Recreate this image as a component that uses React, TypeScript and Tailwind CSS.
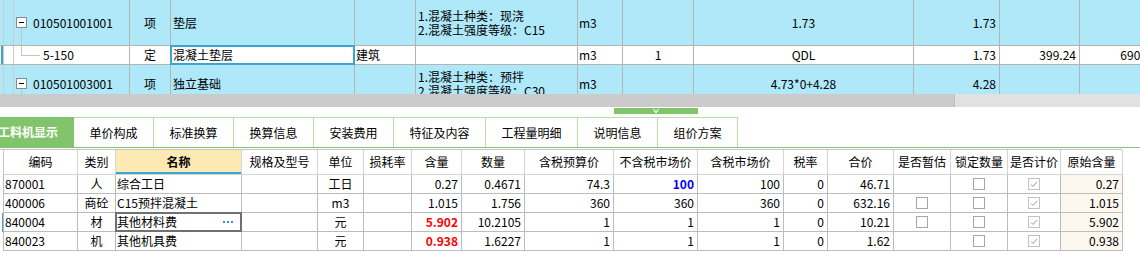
import React from 'react';

const TW = ['w-[4px]', 'w-[10px]', 'w-[116px]', 'w-[41px]', 'w-[184px]', 'w-[61px]', 'w-[162px]', 'w-[45px]', 'w-[71px]', 'w-[220px]', 'w-[86px]', 'w-[80px]', 'w-[81px]'];

function MinusBox() {
  return (
    <div className="w-[11px] h-[11px] shrink-0 border border-[#8a8a8a] bg-white flex items-center justify-center">
      <div className="w-[5px] h-px bg-black" />
    </div>
  );
}

type TC = { content?: React.ReactNode; align?: 'l' | 'c' | 'r'; extra?: string };

function TopRow({ h, cells, white }: { h: string; cells: TC[]; white?: boolean }) {
  return (
    <div className={`flex ${h} ${white ? 'bg-white' : 'bg-[#afe8f9]'} border-b border-[#b4b4b4]`}>
      {cells.map((c, i) => (
        <div
          key={i}
          className={`${TW[i]} shrink-0 h-full border-r ${i < 2 ? 'border-[#cdcdcd]' : 'border-[#b4b4b4]'} flex items-center overflow-hidden whitespace-nowrap ${
            c.align === 'c' ? 'justify-center' : c.align === 'r' ? 'justify-end pr-[3px]' : ''
          } ${c.extra ?? ''}`}
        >
          {c.content}
        </div>
      ))}
    </div>
  );
}

function TopGrid() {
  const feat = (a: string, b: string) => (
    <div className="leading-[14px]">
      <div>{a}</div>
      <div>{b}</div>
    </div>
  );
  return (
    <div className="h-[94px] overflow-hidden bg-[#afe8f9]">
      <div className="w-[1160px]">
        <TopRow
          h="h-[46px]"
          cells={[
            {},
            {},
            {
              extra: 'relative pl-[2px]',
              content: (
                <>
                  <MinusBox />
                  <span className="ml-[6px]">010501001001</span>
                  <div className="absolute left-[7px] top-[28px] bottom-0 w-px bg-[#c4c4c4]" />
                </>
              ),
            },
            { content: '项', align: 'c' },
            { content: '垫层', extra: 'pl-[2px]' },
            {},
            { content: feat('1.混凝土种类：现浇', '2.混凝土强度等级：C15'), extra: 'pl-[2px]' },
            { content: 'm3', extra: 'pl-[1px]' },
            {},
            { content: '1.73', align: 'c' },
            { content: '1.73', align: 'r' },
            {},
            {},
          ]}
        />
        <TopRow
          h="h-[19px]"
          white
          cells={[
            { content: <div className="ml-[1px] w-[2px] h-full bg-[#3ba5d2]" /> },
            {},
            {
              extra: 'relative pl-[29px]',
              content: (
                <>
                  <div className="absolute left-[7px] top-0 h-[9px] w-px bg-[#c4c4c4]" />
                  <div className="absolute left-[7px] top-[9px] w-[19px] h-px bg-[#c4c4c4]" />
                  <span>5-150</span>
                </>
              ),
            },
            { content: '定', align: 'c' },
            {
              extra: 'relative pl-[2px] overflow-visible',
              content: (
                <>
                  <span>混凝土垫层</span>
                  <div className="absolute -left-[1px] -top-[1px] -right-[1px] -bottom-[1px] border-2 border-[#3ba5d2]" />
                </>
              ),
            },
            { content: '建筑', extra: 'pl-[1px]' },
            {},
            { content: 'm3', extra: 'pl-[1px]' },
            { content: '1', align: 'c' },
            { content: 'QDL', align: 'c' },
            { content: '1.73', align: 'r' },
            { content: '399.24', align: 'r' },
            { content: '690.69', align: 'r' },
          ]}
        />
        <TopRow
          h="h-[38px]"
          cells={[
            {},
            {},
            {
              extra: 'relative pl-[2px]',
              content: (
                <>
                  <MinusBox />
                  <span className="ml-[6px]">010501003001</span>
                  <div className="absolute left-[7px] top-[24px] bottom-0 w-px bg-[#c4c4c4]" />
                </>
              ),
            },
            { content: '项', align: 'c' },
            { content: '独立基础', extra: 'pl-[2px]' },
            {},
            { content: feat('1.混凝土种类：预拌', '2.混凝土强度等级：C30'), extra: 'pl-[2px]' },
            { content: 'm3', extra: 'pl-[1px]' },
            {},
            { content: '4.73*0+4.28', align: 'c' },
            { content: '4.28', align: 'r' },
            {},
            {},
          ]}
        />
      </div>
    </div>
  );
}

function Tabs() {
  const tabs: [string, string][] = [
    ['单价构成', 'w-[80px]'],
    ['标准换算', 'w-[80px]'],
    ['换算信息', 'w-[80px]'],
    ['安装费用', 'w-[80px]'],
    ['特征及内容', 'w-[92px]'],
    ['工程量明细', 'w-[92px]'],
    ['说明信息', 'w-[80px]'],
    ['组价方案', 'w-[80px]'],
  ];
  return (
    <div className="h-[31px] flex border-b border-[#82c46c]">
      <div className="w-[74px] h-full bg-[#82c46c] text-white font-bold flex items-center overflow-hidden whitespace-nowrap">
        <span className="-ml-[2px]">工料机显示</span>
      </div>
      {tabs.map(([t, w]) => (
        <div key={t} className={`${w} h-full border-t border-r border-[#b9dfa7] bg-white flex items-center justify-center`}>
          {t}
        </div>
      ))}
    </div>
  );
}

const BW = ['w-[4px]', 'w-[74px]', 'w-[38px]', 'w-[126px]', 'w-[76px]', 'w-[46px]', 'w-[48px]', 'w-[50px]', 'w-[63px]', 'w-[89px]', 'w-[84px]', 'w-[86px]', 'w-[44px]', 'w-[66px]', 'w-[57px]', 'w-[57px]', 'w-[53px]', 'w-[62px]'];
const BA: ('l' | 'c' | 'r')[] = ['l', 'l', 'c', 'l', 'l', 'c', 'r', 'r', 'r', 'r', 'r', 'r', 'r', 'r', 'c', 'c', 'c', 'r'];
const HEAD = ['', '编码', '类别', '名称', '规格及型号', '单位', '损耗率', '含量', '数量', '含税预算价', '不含税市场价', '含税市场价', '税率', '合价', '是否暂估', '锁定数量', '是否计价', '原始含量'];

function Check({ checked }: { checked?: boolean }) {
  return checked ? (
    <div className="w-[12px] h-[12px] border border-[#c2c2c2] bg-white flex items-center justify-center">
      <svg width="8" height="7" viewBox="0 0 8 7">
        <polyline points="1,3.5 3,5.5 7,1" fill="none" stroke="#9a9a9a" strokeWidth="1" />
      </svg>
    </div>
  ) : (
    <div className="w-[12px] h-[12px] border border-[#a6a6a6] bg-white" />
  );
}

type Row = {
  sel?: boolean;
  cells: React.ReactNode[];
};

const red = (t: string) => <span className="text-[#ff0000] font-bold">{t}</span>;

const ROWS: Row[] = [
  {
    cells: ['', '870001', '人', '综合工日', '', '工日', '', '0.27', '0.4671', '74.3', <span className="text-[#0000ff] font-bold">100</span>, '100', '0', '46.71', null, <Check />, <Check checked />, '0.27'],
  },
  {
    cells: ['', '400006', '商砼', 'C15预拌混凝土', '', 'm3', '', '1.015', '1.756', '360', '360', '360', '0', '632.16', <Check />, <Check />, <Check checked />, '1.015'],
  },
  {
    sel: true,
    cells: ['', '840004', '材', '其他材料费', '', '元', '', red('5.902'), '10.2105', '1', '1', '1', '0', '10.21', <Check />, <Check />, <Check checked />, '5.902'],
  },
  {
    cells: ['', '840023', '机', '其他机具费', '', '元', '', red('0.938'), '1.6227', '1', '1', '1', '0', '1.62', null, <Check />, <Check checked />, '0.938'],
  },
];

function alignCls(a: 'l' | 'c' | 'r') {
  return a === 'c' ? 'justify-center' : a === 'r' ? 'justify-end pr-[3px]' : 'pl-[1px]';
}

function BottomTable() {
  return (
    <div className="w-[1122px]">
      <div className="h-px bg-[#c4c4c4]" />
      <div className="flex h-[25px]">
        {HEAD.map((h, i) =>
          i === 0 ? (
            <div key={i} className={`${BW[i]} shrink-0 border-r border-[#c8c8c8]`} />
          ) : (
            <div
              key={i}
              className={`${BW[i]} shrink-0 h-full border-r border-b flex items-center justify-center whitespace-nowrap relative ${
                i === 3 ? 'bg-[#fde9b3] font-bold border-[#d4d4d4]' : 'bg-white border-[#d4d4d4]'
              }`}
            >
              {h}
              {i === 3 && <div className="absolute left-0 right-0 bottom-0 h-[2px] bg-[#3aa6d2]" />}
            </div>
          )
        )}
      </div>
      {ROWS.map((r, ri) => (
        <div key={ri} className="flex h-[19px]">
          {r.cells.map((c, i) =>
            i === 0 ? (
              <div key={i} className={`${BW[i]} shrink-0 h-full border-r border-[#bcbcbc] flex`}>
                {r.sel && <div className="ml-[2px] w-[2px] h-full bg-[#3ba5d2]" />}
              </div>
            ) : (
              <div
                key={i}
                className={`${BW[i]} shrink-0 h-full border-r border-b border-[#bcbcbc] flex items-center whitespace-nowrap ${alignCls(BA[i])} ${
                  i === 17 ? 'bg-[#fdf8ef]' : 'bg-white'
                } ${r.sel && i === 3 ? 'relative overflow-visible' : 'overflow-hidden'}`}
              >
                {c}
                {r.sel && i === 3 && (
                  <>
                    <div className="absolute right-[8px] top-[8px] flex gap-[2px]">
                      <div className="w-[2px] h-[2px] bg-[#3a8fd0]" />
                      <div className="w-[2px] h-[2px] bg-[#3a8fd0]" />
                      <div className="w-[2px] h-[2px] bg-[#3a8fd0]" />
                    </div>
                    <div className="absolute -left-[1px] -top-[1px] -right-[1px] -bottom-[1px] border-2 border-[#707070]" />
                  </>
                )}
              </div>
            )
          )}
        </div>
      ))}
    </div>
  );
}

export default function App() {
  return (
    <div className="w-[1140px] h-[265px] overflow-hidden bg-white text-black text-[12px] leading-[14px] font-['Noto_Sans_CJK_SC','Liberation_Sans',sans-serif]">
      <TopGrid />
      <div className="h-[13px] bg-[#e1e1e1] flex">
        <div className="w-[955px] h-full bg-[#cbcbcb] border-r border-[#bdbdbd]" />
      </div>
      <div className="h-[10px] pt-[1px]">
        <div className="ml-[614px] w-[84px] h-[6px] bg-[#82c46c] flex justify-center">
          <svg width="8" height="6" viewBox="0 0 8 6">
            <polyline points="1,1 4,3.5 7,1" fill="none" stroke="#ffffff" strokeWidth="1" />
            <polyline points="2,3 4,5 6,3" fill="none" stroke="#ffffff" strokeWidth="1" />
          </svg>
        </div>
      </div>
      <Tabs />
      <div className="h-px" />
      <BottomTable />
    </div>
  );
}
